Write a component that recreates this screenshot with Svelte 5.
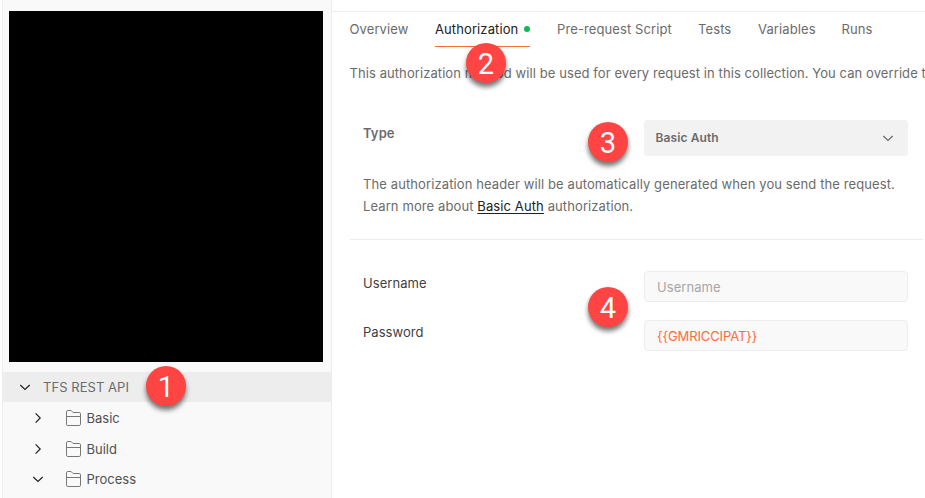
<script>
  const tabs = [
    { label: 'Overview', width: 58.5 },
    { label: 'Authorization', active: true, width: 95 },
    { label: 'Pre-request Script', width: 114 },
    { label: 'Tests', width: 33 },
    { label: 'Variables', width: 56.5 },
    { label: 'Runs', width: 31 },
  ];
  const folders = [
    { name: 'Basic', open: false },
    { name: 'Build', open: false },
    { name: 'Process', open: true },
  ];
  const markers = [
    { n: 1, x: 166, y: 386 },
    { n: 2, x: 486, y: 63 },
    { n: 3, x: 608, y: 142 },
    { n: 4, x: 608, y: 307 },
  ];
</script>

{#snippet chevron(open)}
  <svg class="chevron" width="12" height="12" viewBox="0 0 12 12" fill="none" stroke="currentColor" stroke-width="1.2">
    {#if open}
      <path d="M1.3 4 L6 8.5 L10.7 4" />
    {:else}
      <path d="M3.6 1.3 L8.2 6 L3.6 10.7" />
    {/if}
  </svg>
{/snippet}

<div class="app">
  <aside>
    <div class="blackout"></div>
    <div class="collection">
      {@render chevron(true)}
      <span>TFS REST API</span>
    </div>
    {#each folders as f}
      <div class="folder">
        {@render chevron(f.open)}
        <svg class="icon" width="15" height="16" viewBox="0 0 15 16" fill="none" stroke="#777">
          <path d="M.5 14.2V1.8Q.5.5 1.8.5H5.1L7 2.5H13.2Q14.5 2.5 14.5 3.8V14.2Q14.5 15.5 13.2 15.5H1.8Q.5 15.5.5 14.2M.5 6.5H14.5" />
        </svg>
        <span>{f.name}</span>
      </div>
    {/each}
  </aside>

  <main>
    <nav>
      {#each tabs as t}
        <div class="tab" class:active={t.active} style:width="{t.width}px">
          <span>{t.label}</span>{#if t.active}<i class="dot"></i>{/if}
        </div>
      {/each}
    </nav>
    <p class="intro">This authorization method will be used for every request in this collection. You can override this</p>
    <section class="auth">
      <div class="type-row">
        <b>Type</b>
        <div class="select">
          <b>Basic Auth</b>
          {@render chevron(true)}
        </div>
      </div>
      <p class="help">The authorization header will be automatically generated when you send the request.<br />Learn more about <u>Basic Auth</u> authorization.</p>
    </section>
    <hr />
    <section class="fields">
      <div class="field"><span>Username</span><div class="input placeholder">Username</div></div>
      <div class="field"><span>Password</span><div class="input variable">{'{{GMRICCIPAT}}'}</div></div>
    </section>
  </main>

  {#each markers as m}
    <div class="marker" style:left="{m.x - 20}px" style:top="{m.y - 20}px">{m.n}</div>
  {/each}
</div>

<style>
  .app {
    position: relative;
    display: flex;
    width: 925px;
    height: 498px;
    overflow: hidden;
    background: #fff;
    color: #6b6b6b;
    font: 13px/20px Inter, 'Liberation Sans', sans-serif;
    letter-spacing: 0.105px;
  }
  aside {
    box-sizing: border-box;
    flex: none;
    width: 330px;
    margin-left: 2px;
    padding-top: 11px;
    background: #f9f9f9;
    border: solid #ededed;
    border-width: 0 1px;
  }
  .blackout {
    width: 314px;
    height: 351px;
    margin: 0 0 10px 6px;
    background: #000;
  }
  .collection,
  .folder {
    display: flex;
    align-items: center;
  }
  .collection {
    height: 30px;
    padding-left: 16px;
    gap: 12px;
    background: #ededed;
    letter-spacing: 0.05px;
  }
  .collection .chevron,
  .folder .chevron {
    color: #212121;
  }
  .folder {
    height: 30.6px;
    padding: 2px 0 0 29px;
    box-sizing: border-box;
    color: #505050;
    letter-spacing: 0;
  }
  .icon {
    margin: 0 5.5px 0 22px;
  }
  main {
    flex: 1;
    min-width: 0;
    margin-top: 11px;
    border-top: 1px solid #ededed;
  }
  nav {
    display: flex;
    gap: 27px;
    height: 35px;
    padding-left: 17.5px;
  }
  .tab {
    display: flex;
    align-items: center;
    flex: none;
    box-sizing: border-box;
    height: 35px;
    white-space: nowrap;
    border-bottom: 1px solid transparent;
  }
  .tab.active {
    color: #212121;
    border-color: #ff6c37;
    justify-content: space-between;
  }
  .dot {
    width: 6px;
    height: 6px;
    border-radius: 50%;
    background: #0cbb52;
  }
  p {
    margin: 0;
    white-space: nowrap;
  }
  .intro {
    margin: 16px 0 0 17.5px;
    letter-spacing: 0.08px;
  }
  .auth {
    padding: 37px 17px 0 31px;
  }
  .type-row {
    display: flex;
    justify-content: space-between;
  }
  b {
    font-weight: 600;
  }
  .type-row > b {
    margin-top: 3px;
  }
  .select {
    display: flex;
    align-items: center;
    justify-content: space-between;
    box-sizing: border-box;
    width: 264px;
    height: 36px;
    padding: 0 14px 0 11.5px;
    border-radius: 4px;
    background: #f2f2f2;
    font-size: 12px;
  }
  .help {
    margin-top: 17px;
    line-height: 22px;
  }
  u {
    color: #212121;
    text-underline-offset: 2px;
  }
  hr {
    height: 1px;
    margin: 22px 2px 0 18px;
    border: 0;
    background: #ededed;
  }
  .fields {
    display: flex;
    flex-direction: column;
    gap: 18px;
    padding: 31px 17px 0 31px;
    color: #3f3f3f;
    letter-spacing: 0.05px;
  }
  .field {
    display: flex;
    justify-content: space-between;
  }
  .field > span {
    margin-top: 2px;
  }
  .input {
    box-sizing: border-box;
    width: 264px;
    height: 31px;
    padding: 1px 12px 0;
    border: 1px solid #ededed;
    border-radius: 4px;
    background: #f9f9f9;
    line-height: 29px;
  }
  .placeholder {
    color: #a6a6a6;
  }
  .variable {
    color: #ff6c37;
    letter-spacing: -0.1px;
  }
  .marker {
    position: absolute;
    width: 40px;
    height: 40px;
    border-radius: 50%;
    background: #ff4444;
    box-shadow: 0 4px 5px rgba(0, 0, 0, 0.55);
    color: #fff;
    font: 29px/42px Roboto, Arial, sans-serif;
    letter-spacing: 0;
    text-align: center;
  }
</style>
